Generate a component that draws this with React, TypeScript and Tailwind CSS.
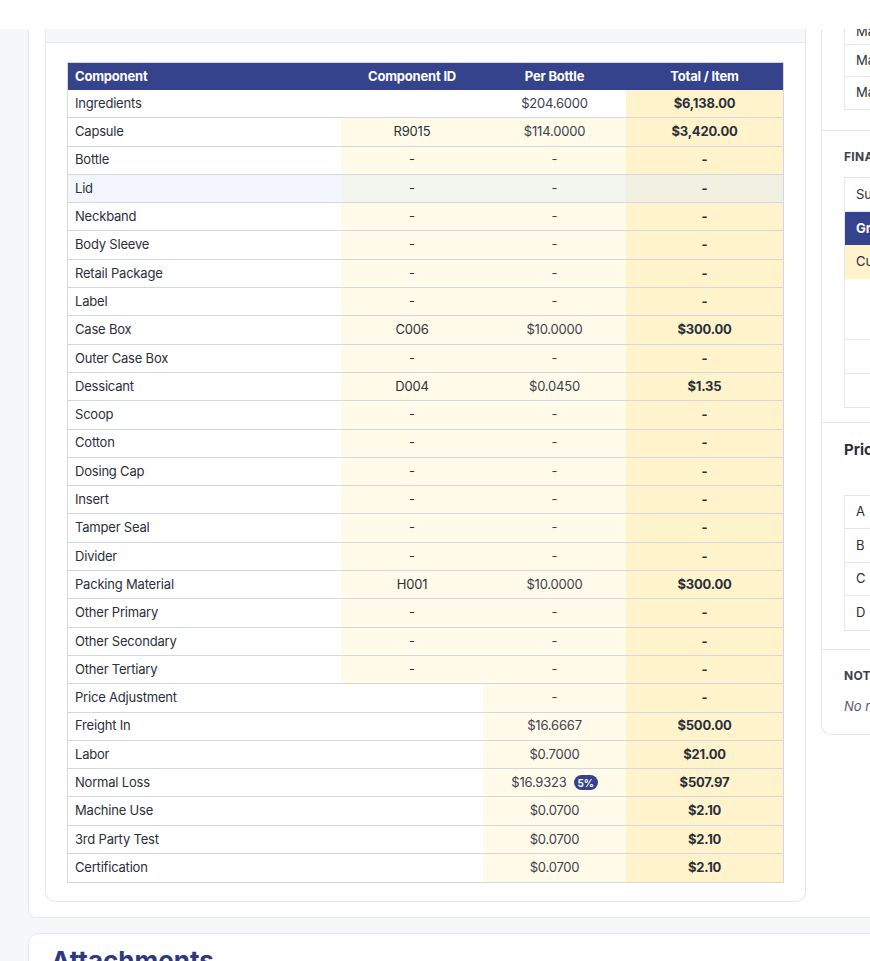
import React from "react";

type Row = { n: string; id?: string; per?: string; tot?: string; kind?: "ing" | "comp" | "extra"; lid?: boolean; badge?: string };

const D = "-";
const rows: Row[] = [
  { n: "Ingredients", id: "", per: "$204.6000", tot: "$6,138.00", kind: "ing" },
  { n: "Capsule", id: "R9015", per: "$114.0000", tot: "$3,420.00" },
  { n: "Bottle" },
  { n: "Lid", lid: true },
  { n: "Neckband" },
  { n: "Body Sleeve" },
  { n: "Retail Package" },
  { n: "Label" },
  { n: "Case Box", id: "C006", per: "$10.0000", tot: "$300.00" },
  { n: "Outer Case Box" },
  { n: "Dessicant", id: "D004", per: "$0.0450", tot: "$1.35" },
  { n: "Scoop" },
  { n: "Cotton" },
  { n: "Dosing Cap" },
  { n: "Insert" },
  { n: "Tamper Seal" },
  { n: "Divider" },
  { n: "Packing Material", id: "H001", per: "$10.0000", tot: "$300.00" },
  { n: "Other Primary" },
  { n: "Other Secondary" },
  { n: "Other Tertiary" },
  { n: "Price Adjustment", kind: "extra" },
  { n: "Freight In", per: "$16.6667", tot: "$500.00", kind: "extra" },
  { n: "Labor", per: "$0.7000", tot: "$21.00", kind: "extra" },
  { n: "Normal Loss", per: "$16.9323", tot: "$507.97", kind: "extra", badge: "5%" },
  { n: "Machine Use", per: "$0.0700", tot: "$2.10", kind: "extra" },
  { n: "3rd Party Test", per: "$0.0700", tot: "$2.10", kind: "extra" },
  { n: "Certification", per: "$0.0700", tot: "$2.10", kind: "extra" },
];

export default function App() {
  return (
    <div className="w-[870px] h-[961px] overflow-hidden bg-[#f6f7f9] text-[#2a2f3a]" style={{ fontFamily: "Inter, 'Liberation Sans', sans-serif" }}>
      <div className="h-[29px] bg-white" />
      <div className="ml-[28px] w-[860px] h-[889px] bg-white border-l border-b border-[#e4e7ec] rounded-bl-[8px] pl-[16px] flex gap-[15px] items-start">
        <div className="w-[761px] shrink-0 border-l border-r border-b border-[#e4e7ec] rounded-b-[10px] bg-white pb-[18px]">
          <div className="h-[14px] bg-[#f6f7f9] border-b border-[#e4e7ec]" />
          <div className="px-[21px] pt-[19px]">
            <div className="border border-[#d3d7de] text-[13px] tracking-[-0.2px]">
              <div className="flex h-[27px] bg-[#35428c] text-white font-bold items-center">
                <div className="w-[273px] pl-[7px]">Component</div>
                <div className="w-[142px] text-center">Component ID</div>
                <div className="w-[143px] text-center">Per Bottle</div>
                <div className="flex-1 text-center">Total / Item</div>
              </div>
              {rows.map((r, i) => {
                const idBg = r.kind === "ing" || r.kind === "extra" ? "bg-white" : r.lid ? "bg-[#f1f5ee]" : "bg-[#fffbe8]";
                const perBg = r.kind === "ing" ? "bg-white" : r.lid ? "bg-[#f1f5ee]" : "bg-[#fffbe8]";
                const totBg = r.lid ? "bg-[#f1f1e2]" : "bg-[#fff3cc]";
                return (
                  <div key={i} className={`flex h-[28.3px] items-center ${i < rows.length - 1 ? "border-b border-[#d3d7de]" : ""}`}>
                    <div className={`w-[273px] h-full flex items-center pl-[7px] ${r.lid ? "bg-[#f3f7fd]" : "bg-white"}`}>{r.n}</div>
                    <div className={`w-[142px] h-full flex items-center justify-center ${idBg}`}>{r.kind === "ing" || r.kind === "extra" ? "" : r.id ?? D}</div>
                    <div className={`w-[143px] h-full flex items-center justify-center gap-[7px] ${perBg} text-[#3b4150]`}>
                      <span>{r.per ?? D}</span>
                      {r.badge && <span className="bg-[#35428c] text-white text-[10px] font-bold rounded-full px-[4px] h-[15px] flex items-center leading-none">{r.badge}</span>}
                    </div>
                    <div className={`flex-1 h-full flex items-center justify-center font-bold ${totBg}`}>{r.tot ?? D}</div>
                  </div>
                );
              })}
            </div>
          </div>
        </div>
        <div className="w-[60px] shrink-0 h-[706px] bg-white border-l border-b border-[#e4e7ec] rounded-bl-[10px] overflow-hidden text-[13px] whitespace-nowrap">
          <div className="ml-[22px] border-l border-[#e4e7ec]">
            <div className="h-[16px] border-b border-[#e4e7ec] pl-[11px] leading-[4px] overflow-hidden">Ma</div>
            <div className="h-[32px] border-b border-[#e4e7ec] pl-[11px] flex items-center">Ma</div>
            <div className="h-[33px] border-b border-[#e4e7ec] pl-[11px] flex items-center">Ma</div>
          </div>
          <div className="h-[20px]" />
          <div className="border-t border-[#e4e7ec] pt-[17px] pl-[22px]">
            <div className="text-[12px] font-bold text-[#3b4150] tracking-wide">FINANCIAL</div>
            <div className="mt-[11px] border border-[#e4e7ec] border-r-0">
              <div className="h-[34px] flex items-center pl-[11px] border-b border-[#e4e7ec]">Subtotal</div>
              <div className="h-[33px] flex items-center pl-[11px] bg-[#35428c] text-white font-bold">Gross</div>
              <div className="h-[34px] flex items-center pl-[11px] bg-[#fff3cc]">Cu</div>
              <div className="h-[61px] border-b border-[#e4e7ec]" />
              <div className="h-[34px] border-b border-[#e4e7ec]" />
              <div className="h-[33px]" />
            </div>
          </div>
          <div className="mt-[14px] border-t border-[#e4e7ec] pt-[16px] pl-[22px]">
            <div className="text-[15px] font-bold text-[#2a2f3a]">Pricing</div>
            <div className="mt-[33px] border border-[#e4e7ec] border-r-0">
              {["A", "B", "C", "D"].map((l, i) => (
                <div key={l} className={`h-[33.5px] flex items-center pl-[11px] ${i < 3 ? "border-b border-[#e4e7ec]" : ""}`}>{l}</div>
              ))}
            </div>
          </div>
          <div className="mt-[18px] border-t border-[#e4e7ec] pt-[17px] pl-[22px]">
            <div className="text-[12px] font-bold text-[#3b4150] tracking-wide">NOTES</div>
            <div className="mt-[12px] italic text-[#555c6a]">No notes</div>
          </div>
        </div>
      </div>
      <div className="ml-[28px] mt-[15px] w-[860px] h-[40px] bg-white border border-[#e4e7ec] rounded-tl-[10px] pl-[22px] pt-[14px]">
        <div className="text-[26px] font-bold text-[#2e3a80] leading-none">Attachments</div>
      </div>
    </div>
  );
}
